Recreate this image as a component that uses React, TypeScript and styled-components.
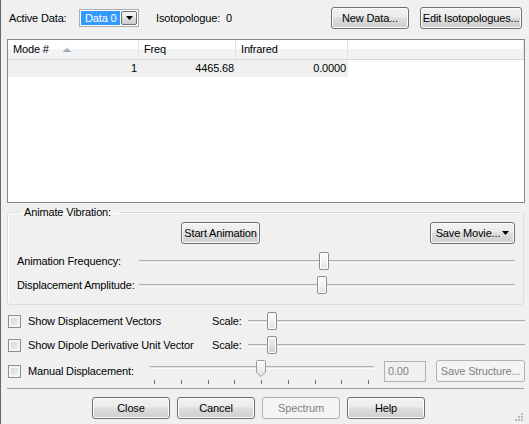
import React from "react";
import styled, { createGlobalStyle, css } from "styled-components";

const GlobalStyle = createGlobalStyle`
  html, body {
    margin: 0;
    padding: 0;
    background: #f0f0f0;
  }
  body {
    font-family: "Liberation Sans", Arial, sans-serif;
    font-size: 11px;
    line-height: 13px;
    letter-spacing: -0.15px;
    color: #000;
  }
`;

const Window = styled.div`
  width: 529px;
  height: 424px;
  box-sizing: border-box;
  border-left: 1px solid #5f6a76;
  background: #f0f0f0;
  display: flex;
  flex-direction: column;
  overflow: hidden;
`;

const TopBar = styled.div`
  display: flex;
  align-items: center;
  height: 22px;
  padding: 7px 7px 0 8px;
`;

const Label = styled.span<{ $w?: number }>`
  white-space: nowrap;
  ${(p) =>
    p.$w &&
    css`
      width: ${p.$w}px;
      flex: none;
    `}
`;

const Spacer = styled.div`
  flex: 1;
`;

const Button = styled.button<{ $w: number; $ml?: number; $mr?: number }>`
  width: ${(p) => p.$w}px;
  height: 22px;
  margin-left: ${(p) => p.$ml ?? 0}px;
  margin-right: ${(p) => p.$mr ?? 0}px;
  flex: none;
  box-sizing: border-box;
  padding: 0;
  border: 1px solid #707070;
  border-radius: 3px;
  background: linear-gradient(#f2f2f2 0%, #ebebeb 45%, #dddddd 50%, #cfcfcf 100%);
  box-shadow: inset 0 0 0 1px #fbfbfb;
  font: inherit;
  letter-spacing: inherit;
  color: #000;
  display: flex;
  align-items: center;
  justify-content: center;
  gap: 2px;

  &:disabled {
    border-color: #adb2b5;
    background: #f4f4f4;
    box-shadow: none;
    color: #838383;
  }
`;

const Combo = styled.div`
  display: flex;
  width: 60px;
  height: 18px;
  box-sizing: border-box;
  border: 1px solid #abadb3;
  background: #fff;
  padding: 1px;
  gap: 1px;
`;

const ComboText = styled.span`
  flex: 1;
  background: #3399ff;
  color: #fff;
  padding-left: 4px;
  line-height: 14px;
`;

const ComboButton = styled.span`
  width: 16px;
  box-sizing: border-box;
  border: 1px solid #707070;
  border-radius: 2px;
  background: linear-gradient(#f2f2f2, #ebebeb 45%, #dddddd 50%, #cfcfcf);
  display: flex;
  align-items: center;
  justify-content: center;
`;

const ListView = styled.div`
  margin: 10px 4px 0 6px;
  height: 164px;
  box-sizing: border-box;
  border: 1px solid #828790;
  background: #fff;
`;

const HeaderRow = styled.div`
  display: flex;
  height: 20px;
  box-sizing: border-box;
  border-bottom: 1px solid #d5d5d5;
  background: linear-gradient(#ffffff 0%, #ffffff 45%, #f3f4f6 50%, #f1f2f4 100%);
`;

const HeaderCell = styled.div<{ $w?: number }>`
  ${(p) => (p.$w ? `width: ${p.$w}px; flex: none;` : "flex: 1;")}
  box-sizing: border-box;
  border-right: 1px solid #e3e5e8;
  padding-left: 5px;
  display: flex;
  align-items: center;
  gap: 13px;
`;

const DataRow = styled.div`
  display: flex;
  height: 17px;
`;

const DataCell = styled.div<{ $w: number }>`
  width: ${(p) => p.$w}px;
  box-sizing: border-box;
  background: #f0f0f0;
  text-align: right;
  padding-right: 2px;
  line-height: 17px;
`;

const GroupBox = styled.fieldset`
  margin: 3px 0 0 6px;
  width: 517px;
  box-sizing: border-box;
  padding: 0 8px 8px 9px;
  border: 1px solid #d5dfe5;
  border-radius: 3px;
  box-shadow: inset 1px 1px 0 #fff;
`;

const Legend = styled.legend`
  margin-left: 3px;
  padding: 0 9px 0 4px;
`;

const GroupButtons = styled.div`
  display: flex;
  margin-top: 3px;
  padding-left: 164px;
`;

const SliderRow = styled.div<{ $mt: number }>`
  display: flex;
  align-items: center;
  height: 22px;
  margin-top: ${(p) => p.$mt}px;
`;

const Track = styled.div`
  flex: 1;
  position: relative;
  height: 1px;
  border-top: 1px solid #b0b0b0;
  border-bottom: 1px solid #fcfcfc;
  background: #e4e4e4;
`;

const Thumb = styled.div<{ $x: number; $pressed?: boolean }>`
  position: absolute;
  left: ${(p) => p.$x}px;
  top: -9px;
  width: 10px;
  height: 18px;
  box-sizing: border-box;
  border: 1px solid #8b8b8b;
  border-radius: 2px;
  background: ${(p) =>
    p.$pressed
      ? "linear-gradient(#f4f4f4 0%, #e4e4e4 40%, #cfcfcf 100%)"
      : "linear-gradient(#fdfdfd 0%, #f1f1f1 50%, #e3e3e3 100%)"};
  box-shadow: inset 0 0 0 1px #fff;
`;

const PointerThumb = styled.svg<{ $x: number }>`
  position: absolute;
  left: ${(p) => p.$x}px;
  top: -7px;
`;

const CheckRow = styled.div<{ $h: number; $mt?: number }>`
  display: flex;
  align-items: center;
  height: ${(p) => p.$h}px;
  margin-top: ${(p) => p.$mt ?? 0}px;
  padding: 0 4px 0 7px;
`;

const CheckBox = styled.span`
  width: 13px;
  height: 13px;
  flex: none;
  box-sizing: border-box;
  border: 1px solid #8e8f8f;
  background: linear-gradient(135deg, #d2d2d2 0%, #f6f6f6 100%);
  box-shadow: inset 0 0 0 2px #f4f4f4;
  margin-right: 7px;
`;

const ManualSlider = styled.div`
  width: 224px;
  flex: none;
  align-self: flex-start;
  padding-top: 7px;
`;

const Ticks = styled.div`
  display: flex;
  justify-content: space-between;
  padding: 0 5px 0 4px;
  margin-top: 11px;
`;

const Tick = styled.span`
  width: 1px;
  height: 4px;
  background: #6f6f6f;
`;

const TextBox = styled.div`
  width: 42px;
  height: 21px;
  box-sizing: border-box;
  margin-left: 10px;
  border: 1px solid #adb2b5;
  background: #f0f0f0;
  color: #838383;
  padding-left: 3px;
  line-height: 19px;
`;

const Separator = styled.div`
  margin: 5px 5px 0 6px;
  border-top: 1px solid #a0a0a0;
`;

const BottomBar = styled.div`
  display: flex;
  margin-top: 8px;
  padding-left: 91px;
  gap: 7px;
  flex: 1;
`;

const Grip = styled.svg`
  margin-left: auto;
  align-self: flex-end;
  margin-bottom: 3px;
  margin-right: 6px;
`;

const HSlider = ({ x, pressed }: { x: number; pressed?: boolean }) => (
  <Track>
    <Thumb $x={x} $pressed={pressed} />
  </Track>
);

const SortArrow = () => (
  <svg width="10" height="6" viewBox="0 0 10 6">
    <defs>
      <linearGradient id="sa" x1="0" y1="0" x2="0" y2="1">
        <stop offset="0" stopColor="#c3c8cd" />
        <stop offset="1" stopColor="#9ea5ac" />
      </linearGradient>
    </defs>
    <polygon points="5,0.5 9.5,5 0.5,5" fill="url(#sa)" />
  </svg>
);

const DownArrow = () => (
  <svg width="7" height="4" viewBox="0 0 7 4">
    <polygon points="0,0 7,0 3.5,4" fill="#000" />
  </svg>
);

export default function App() {
  const ticks = Array.from({ length: 9 });
  return (
    <>
      <GlobalStyle />
      <Window>
        <TopBar>
          <Label $w={70}>Active Data:</Label>
          <Combo>
            <ComboText>Data 0</ComboText>
            <ComboButton>
              <DownArrow />
            </ComboButton>
          </Combo>
          <Label style={{ marginLeft: 17 }}>Isotopologue:&nbsp; 0</Label>
          <Spacer />
          <Button $w={78}>New Data...</Button>
          <Button $w={102} $ml={11}>
            Edit Isotopologues...
          </Button>
        </TopBar>

        <ListView>
          <HeaderRow>
            <HeaderCell $w={131}>
              Mode # <SortArrow />
            </HeaderCell>
            <HeaderCell $w={97}>Freq</HeaderCell>
            <HeaderCell $w={112}>Infrared</HeaderCell>
            <HeaderCell />
          </HeaderRow>
          <DataRow>
            <DataCell $w={131}>1</DataCell>
            <DataCell $w={97}>4465.68</DataCell>
            <DataCell $w={112}>0.0000</DataCell>
          </DataRow>
        </ListView>

        <GroupBox>
          <Legend>Animate Vibration:</Legend>
          <GroupButtons>
            <Button $w={79}>Start Animation</Button>
            <Spacer />
            <Button $w={85}>
              Save Movie...
              <DownArrow />
            </Button>
          </GroupButtons>
          <SliderRow $mt={6}>
            <Label $w={122}>Animation Frequency:</Label>
            <HSlider x={180} />
          </SliderRow>
          <SliderRow $mt={2}>
            <Label $w={122}>Displacement Amplitude:</Label>
            <HSlider x={178} />
          </SliderRow>
        </GroupBox>

        <CheckRow $h={24} $mt={4}>
          <CheckBox />
          <Label $w={184}>Show Displacement Vectors</Label>
          <Label $w={36}>Scale:</Label>
          <HSlider x={19} />
        </CheckRow>
        <CheckRow $h={24}>
          <CheckBox />
          <Label $w={184}>Show Dipole Derivative Unit Vector</Label>
          <Label $w={36}>Scale:</Label>
          <HSlider x={19} pressed />
        </CheckRow>
        <CheckRow $h={24} $mt={2}>
          <CheckBox />
          <Label $w={122}>Manual Displacement:</Label>
          <ManualSlider>
            <Track>
              <PointerThumb $x={106} width="10" height="17" viewBox="0 0 10 17">
                <defs>
                  <linearGradient id="pt" x1="0" y1="0" x2="0" y2="1">
                    <stop offset="0" stopColor="#fdfdfd" />
                    <stop offset="1" stopColor="#e2e2e2" />
                  </linearGradient>
                </defs>
                <path
                  d="M1.5 0.5 H8.5 Q9.5 0.5 9.5 1.5 V12 L5 16.5 L0.5 12 V1.5 Q0.5 0.5 1.5 0.5 Z"
                  fill="url(#pt)"
                  stroke="#9a9a9a"
                />
              </PointerThumb>
            </Track>
            <Ticks>
              {ticks.map((_, i) => (
                <Tick key={i} />
              ))}
            </Ticks>
          </ManualSlider>
          <TextBox>0.00</TextBox>
          <Button $w={89} $ml={10} disabled>
            Save Structure...
          </Button>
        </CheckRow>

        <Separator />

        <BottomBar>
          <Button $w={78}>Close</Button>
          <Button $w={78}>Cancel</Button>
          <Button $w={78} disabled>
            Spectrum
          </Button>
          <Button $w={78}>Help</Button>
          <Grip width="8" height="8" viewBox="0 0 8 8">
            {[
              [6, 0],
              [3, 3],
              [6, 3],
              [0, 6],
              [3, 6],
              [6, 6],
            ].map(([x, y], i) => (
              <rect key={i} x={x} y={y} width="2" height="2" fill="#b8b8b8" />
            ))}
          </Grip>
        </BottomBar>
      </Window>
    </>
  );
}
